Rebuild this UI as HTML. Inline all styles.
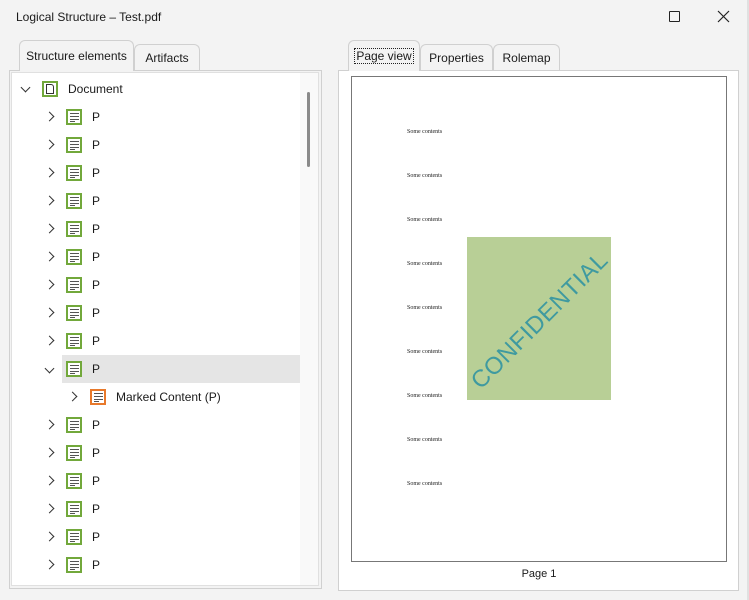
<!DOCTYPE html>
<html><head><style>
*{box-sizing:border-box;margin:0;padding:0}
html,body{width:749px;height:600px;overflow:hidden}
body{background:#f3f3f3;font-family:"Liberation Sans",sans-serif;font-size:12px;color:#1a1a1a;position:relative}
.abs{position:absolute}
.tab{position:absolute;border:1px solid #d0d0d0;border-bottom:none;border-radius:6px 6px 0 0;background:#f3f3f3;text-align:center}
.row{position:absolute;height:28px;line-height:28px;font-size:12px}
.chev{position:absolute;width:7px;height:7px;border-right:1.3px solid #333;border-bottom:1.3px solid #333}
.pi{position:absolute;width:16px;height:16px;border:2px solid #72a83b;background:#fff}
.pi i{position:absolute;left:2px;height:1px;background:#555}
.sc{position:absolute;left:407px;font-family:"Liberation Serif",serif;font-size:6px;color:#222}
</style></head><body>
<div class="abs" style="left:16px;top:10px;font-size:12px">Logical Structure – Test.pdf</div>
<div class="abs" style="left:669px;top:11px;width:11px;height:11px;border:1.3px solid #222;border-radius:1px"></div>
<svg class="abs" style="left:717px;top:10px" width="13" height="13"><path d="M1 1L12 12M12 1L1 12" stroke="#222" stroke-width="1.2"/></svg>
<div class="abs" style="right:0;top:0;width:2px;height:600px;background:#e0e0e0"></div>

<div class="tab" style="left:19px;top:40px;width:115px;height:31px;line-height:31px;z-index:2">Structure elements</div>
<div class="tab" style="left:134px;top:44px;width:66px;height:26px;line-height:26px">Artifacts</div>
<div class="abs" style="left:9px;top:70px;width:313px;height:519px;border:1px solid #d0d0d0;background:#f3f3f3"></div>
<div class="abs" style="left:11px;top:72px;width:308px;height:514px;background:#fff;border:1px solid #e0e0e0"></div>
<div class="abs" style="left:300px;top:73px;width:18px;height:512px;background:#f9f9f9"></div>
<div class="abs" style="left:307px;top:92px;width:3px;height:75px;background:#8a8a8a;border-radius:2px"></div>
<div class="abs" style="left:12px;top:73px;width:288px;height:512px;overflow:hidden">
<div class="abs" style="left:50px;top:282px;width:238px;height:28px;background:#e5e5e5"></div>
<div id="tree" class="abs" style="left:-12px;top:-73px;width:300px;height:585px"></div>
</div>

<div class="tab" style="left:348px;top:40px;width:72px;height:31px;line-height:30px;z-index:2"><span style="outline:1px dotted #222;padding:0 1px">Page view</span></div>
<div class="tab" style="left:420px;top:44px;width:73px;height:26px;line-height:26px">Properties</div>
<div class="tab" style="left:493px;top:44px;width:67px;height:26px;line-height:26px">Rolemap</div>
<div class="abs" style="left:338px;top:70px;width:401px;height:521px;border:1px solid #d0d0d0;background:#fff"></div>
<div class="abs" style="left:351px;top:76px;width:376px;height:486px;border:1px solid #777;background:#fff"></div>
<div class="abs" style="left:351px;top:568px;width:376px;text-align:center;font-size:11px">Page 1</div>
<div class="abs" style="left:467px;top:237px;width:144px;height:163px;background:#b8cf96;overflow:hidden">
<div class="abs" style="left:-22px;top:70px;width:190px;text-align:center;font-size:24px;color:#3f9aa0;transform:rotate(-45deg);white-space:nowrap;letter-spacing:0.5px">CONFIDENTIAL</div>
</div>
<div id="sc"></div>

<script>
var t='';
function chev(x,y,down){return '<div class="chev" style="left:'+x+'px;top:'+y+'px;transform:rotate('+(down?45:-45)+'deg)"></div>';}
function picon(x,y,col){return '<div class="pi" style="left:'+x+'px;top:'+y+'px;border-color:'+col+'"><i style="top:2px;width:9px"></i><i style="top:5px;width:9px"></i><i style="top:8px;width:9px"></i><i style="top:10px;width:5px"></i></div>';}
t+=chev(22,84,true);
t+='<div class="pi" style="left:42px;top:81px"><div style="position:absolute;left:2px;top:1px;width:8px;height:10px;border:1.3px solid #333;border-radius:0 3px 0 0"></div></div>';
t+='<div class="row" style="left:68px;top:75px">Document</div>';
for(var i=0;i<17;i++){var y=103+i*28;if(i>=10)y+=28;
 t+=chev(46,y+10,i==9);
 t+=picon(66,y+6,'#72a83b');
 t+='<div class="row" style="left:92px;top:'+y+'px">P</div>';
 if(i==9){var y2=y+28;t+=chev(69,y2+10,false);t+=picon(90,y2+6,'#e8792b');t+='<div class="row" style="left:116px;top:'+y2+'px">Marked Content (P)</div>';}
}
document.getElementById('tree').innerHTML=t;
var s='';for(var k=0;k<9;k++){s+='<div class="sc" style="top:'+(129+k*44)+'px">Some contents</div>';}
document.getElementById('sc').innerHTML=s;
</script>
</body></html>
